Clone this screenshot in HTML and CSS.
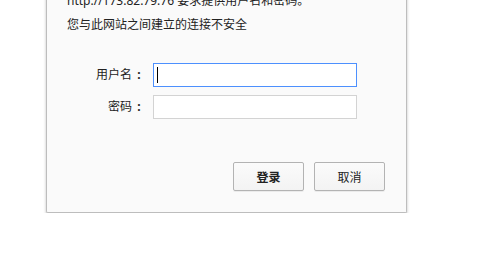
FILE: index.html
```html
<!DOCTYPE html>
<html lang="zh-CN">
<head>
<meta charset="utf-8">
<title>登录</title>
<link rel="stylesheet" href="styles.css">
</head>
<body>
<div class="dialog">
  <div class="msg">
    <div class="line">http://173.82.79.76 要求提供用户名和密码。</div>
    <div class="line">您与此网站之间建立的连接不安全</div>
  </div>
  <div class="form">
    <label class="label">用户名<span class="colon">:</span></label>
    <div class="field focused"><span class="caret"></span></div>
    <label class="label">密码<span class="colon">:</span></label>
    <div class="field"></div>
  </div>
  <div class="actions">
    <button class="btn primary">登录</button>
    <button class="btn">取消</button>
  </div>
</div>
</body>
</html>
```
FILE: styles.css
```css
html, body {
  margin: 0;
  padding: 0;
  background: #ffffff;
}
body {
  font-family: "Noto Sans", "Noto Sans CJK SC", sans-serif;
  font-size: 12px;
  color: #222222;
  overflow: hidden;
}
.dialog {
  box-sizing: border-box;
  margin: -11px 0 0 46px;
  width: 361px;
  background: #fafafa;
  border: 1px solid #bdbdbd;
  border-top: none;
  border-radius: 0 0 2px 2px;
  box-shadow: 0 2px 3px rgba(0, 0, 0, 0.25);
  padding: 0 21px 21px 20px;
}
.msg .line {
  line-height: 24px;
  white-space: nowrap;
}
.form {
  margin-top: 26px;
  display: grid;
  grid-template-columns: 77px 204px;
  column-gap: 9px;
  row-gap: 8px;
  align-items: center;
}
.label {
  text-align: right;
  line-height: 16px;
}
.colon {
  display: inline-block;
  width: 12px;
  padding-left: 2px;
  box-sizing: border-box;
  text-align: center;
  font-weight: bold;
}
.field {
  box-sizing: border-box;
  height: 24px;
  border: 1px solid #d3d3d3;
  background: #ffffff;
  display: flex;
  align-items: center;
  padding-left: 3px;
}
.field.focused {
  border-color: #4d90fe;
}
.caret {
  width: 1px;
  height: 16px;
  background: #000000;
}
.actions {
  margin-top: 43px;
  display: flex;
  justify-content: flex-end;
  gap: 10px;
}
.btn {
  box-sizing: border-box;
  width: 71px;
  height: 29px;
  font-family: "Noto Sans", "Noto Sans CJK SC", sans-serif;
  font-size: 12px;
  color: #222222;
  background: linear-gradient(#fbfbfb, #f3f3f3);
  border: 1px solid #b3b3b3;
  border-radius: 2px;
  box-shadow: 0 1px 0 rgba(0, 0, 0, 0.06);
  padding: 0;
}
.btn.primary {
  font-weight: bold;
}
```
